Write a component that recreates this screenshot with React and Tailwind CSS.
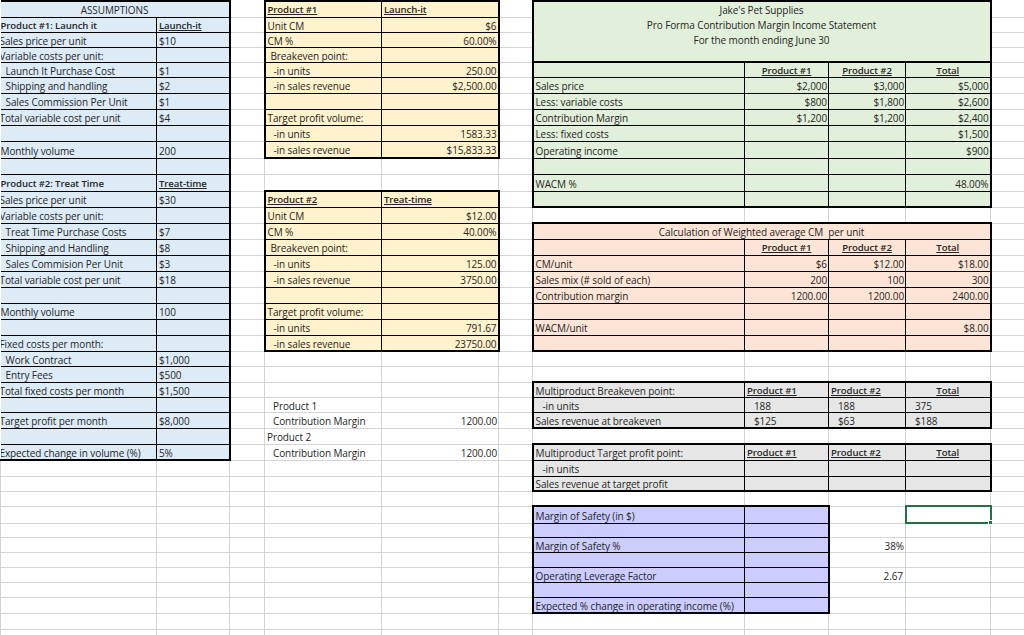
import React from 'react';

const colWidths = ['w-[156px]', 'w-[73px]', 'w-[35px]', 'w-[117px]', 'w-[117px]', 'w-[34px]', 'w-[212px]', 'w-[84px]', 'w-[77px]', 'w-[85px]', 'w-[40px]'];

const rowHeights = [
  'h-[16px]', 'h-[15px]', 'h-[15px]', 'h-[15px]', 'h-[15px]', 'h-[16px]', 'h-[16px]', 'h-[16px]', 'h-[16px]', 'h-[17px]',
  'h-[16px]', 'h-[17px]', 'h-[16px]', 'h-[16px]', 'h-[16px]', 'h-[16px]', 'h-[16px]', 'h-[16px]', 'h-[16px]', 'h-[16px]',
  'h-[16px]', 'h-[16px]', 'h-[15px]', 'h-[16px]', 'h-[15px]', 'h-[15px]', 'h-[16px]', 'h-[16px]', 'h-[16px]', 'h-[16px]',
  'h-[15px]', 'h-[15px]', 'h-[17px]', 'h-[14px]', 'h-[15px]', 'h-[15px]', 'h-[15px]', 'h-[15px]', 'h-[16px]', 'h-[16px]', 'h-[16px]',
];

const blocks = [
  { r0: 0, r1: 28, c0: 0, c1: 1, fill: 'bg-[#ddebf7]' },
  { r0: 0, r1: 9, c0: 3, c1: 4, fill: 'bg-[#fff2cc]' },
  { r0: 12, r1: 21, c0: 3, c1: 4, fill: 'bg-[#fff2cc]' },
  { r0: 0, r1: 12, c0: 6, c1: 9, fill: 'bg-[#e2efda]' },
  { r0: 14, r1: 21, c0: 6, c1: 9, fill: 'bg-[#fce4d6]' },
  { r0: 24, r1: 26, c0: 6, c1: 9, fill: 'bg-[#e6e6e6]' },
  { r0: 28, r1: 30, c0: 6, c1: 9, fill: 'bg-[#e6e6e6]' },
  { r0: 32, r1: 38, c0: 6, c1: 7, fill: 'bg-[#ccccff]' },
];

const right = 'text-right pr-[1px]';
const center = 'text-center';
const ind = 'pl-[5px]';
const ind2 = 'pl-[8px]';
const left = 'pl-[2px]';
const num = 'pl-[9px]';
const bold = 'font-semibold text-[9.6px]';
const head2 = 'font-semibold text-[9.6px] underline pl-[2px]';
const headC = 'font-semibold text-[9.6px] underline text-center';

// row, col, text, extra classes
const cells = [
  [0, 0, 'ASSUMPTIONS', center, 2],
  [1, 0, 'Product #1: Launch it', bold], [1, 1, 'Launch-it', head2],
  [2, 0, 'Sales price per unit', '-indent-[1px]'], [2, 1, '$10', left],
  [3, 0, 'Variable costs per unit:', '-indent-[1px]'],
  [4, 0, 'Launch It Purchase Cost', ind], [4, 1, '$1', left],
  [5, 0, 'Shipping and handling', ind], [5, 1, '$2', left],
  [6, 0, 'Sales Commission Per Unit', ind], [6, 1, '$1', left],
  [7, 0, 'Total variable cost per unit', '-indent-[1px]'], [7, 1, '$4', left],
  [9, 0, 'Monthly volume'], [9, 1, '200', left],
  [11, 0, 'Product #2: Treat Time', bold], [11, 1, 'Treat-time', head2],
  [12, 0, 'Sales price per unit', '-indent-[1px]'], [12, 1, '$30', left],
  [13, 0, 'Variable costs per unit:', '-indent-[1px]'],
  [14, 0, 'Treat Time Purchase Costs', ind], [14, 1, '$7', left],
  [15, 0, 'Shipping and Handling', ind], [15, 1, '$8', left],
  [16, 0, 'Sales Commision Per Unit', ind], [16, 1, '$3', left],
  [17, 0, 'Total variable cost per unit', '-indent-[1px]'], [17, 1, '$18', left],
  [19, 0, 'Monthly volume'], [19, 1, '100', left],
  [21, 0, 'Fixed costs per month:', '-indent-[1px]'],
  [22, 0, 'Work Contract', ind], [22, 1, '$1,000', left],
  [23, 0, 'Entry Fees', ind], [23, 1, '$500', left],
  [24, 0, 'Total fixed costs per month', '-indent-[1px]'], [24, 1, '$1,500', left],
  [26, 0, 'Target profit per month', '-indent-[1px]'], [26, 1, '$8,000', left],
  [28, 0, 'Expected change in volume (%)', '-indent-[1px]'], [28, 1, '5%', left],

  [0, 3, 'Product #1', head2], [0, 4, 'Launch-it', head2],
  [1, 3, 'Unit CM', left], [1, 4, '$6', right],
  [2, 3, 'CM %', left], [2, 4, '60.00%', right],
  [3, 3, 'Breakeven point:', 'pl-[5px]'],
  [4, 3, '-in units', ind2], [4, 4, '250.00', right],
  [5, 3, '-in sales revenue', ind2], [5, 4, '$2,500.00', right],
  [7, 3, 'Target profit volume:', left],
  [8, 3, '-in units', ind2], [8, 4, '1583.33', right],
  [9, 3, '-in sales revenue', ind2], [9, 4, '$15,833.33', right],

  [12, 3, 'Product #2', head2], [12, 4, 'Treat-time', head2],
  [13, 3, 'Unit CM', left], [13, 4, '$12.00', right],
  [14, 3, 'CM %', left], [14, 4, '40.00%', right],
  [15, 3, 'Breakeven point:', 'pl-[5px]'],
  [16, 3, '-in units', ind2], [16, 4, '125.00', right],
  [17, 3, '-in sales revenue', ind2], [17, 4, '3750.00', right],
  [19, 3, 'Target profit volume:', left],
  [20, 3, '-in units', ind2], [20, 4, '791.67', right],
  [21, 3, '-in sales revenue', ind2], [21, 4, '23750.00', right],

  [25, 3, 'Product 1', ind2],
  [26, 3, 'Contribution Margin', ind2], [26, 4, '1200.00', right],
  [27, 3, 'Product 2', left],
  [28, 3, 'Contribution Margin', ind2], [28, 4, '1200.00', right],

  [4, 7, 'Product #1', headC], [4, 8, 'Product #2', headC], [4, 9, 'Total', headC],
  [5, 6, 'Sales price', left], [5, 7, '$2,000', right], [5, 8, '$3,000', right], [5, 9, '$5,000', right],
  [6, 6, 'Less: variable costs', left], [6, 7, '$800', right], [6, 8, '$1,800', right], [6, 9, '$2,600', right],
  [7, 6, 'Contribution Margin', left], [7, 7, '$1,200', right], [7, 8, '$1,200', right], [7, 9, '$2,400', right],
  [8, 6, 'Less: fixed costs', left], [8, 9, '$1,500', right],
  [9, 6, 'Operating income', left], [9, 9, '$900', right],
  [11, 6, 'WACM %', left], [11, 9, '48.00%', right],

  [14, 6, 'Calculation of Weighted average CM  per unit', 'text-center whitespace-pre', 4],
  [15, 7, 'Product #1', headC], [15, 8, 'Product #2', headC], [15, 9, 'Total', headC],
  [16, 6, 'CM/unit', left], [16, 7, '$6', right], [16, 8, '$12.00', right], [16, 9, '$18.00', right],
  [17, 6, 'Sales mix (# sold of each)', left], [17, 7, '200', right], [17, 8, '100', right], [17, 9, '300', right],
  [18, 6, 'Contribution margin', left], [18, 7, '1200.00', right], [18, 8, '1200.00', right], [18, 9, '2400.00', right],
  [20, 6, 'WACM/unit', left], [20, 9, '$8.00', right],

  [24, 6, 'Multiproduct Breakeven point:', left], [24, 7, 'Product #1', head2], [24, 8, 'Product #2', head2], [24, 9, 'Total', headC],
  [25, 6, '-in units', 'pl-[9px]'], [25, 7, '188', num], [25, 8, '188', num], [25, 9, '375', num],
  [26, 6, 'Sales revenue at breakeven', left], [26, 7, '$125', num], [26, 8, '$63', num], [26, 9, '$188', num],

  [28, 6, 'Multiproduct Target profit point:', left], [28, 7, 'Product #1', head2], [28, 8, 'Product #2', head2], [28, 9, 'Total', headC],
  [29, 6, '-in units', 'pl-[9px]'],
  [30, 6, 'Sales revenue at target profit', left],

  [32, 6, 'Margin of Safety (in $)', left],
  [34, 6, 'Margin of Safety %', left], [34, 8, '38%', right],
  [36, 6, 'Operating Leverage Factor', left], [36, 8, '2.67', 'text-right pr-[2px]'],
  [38, 6, 'Expected % change in operating income (%)', left],
];

const lookup = {};
cells.forEach(([r, c, text, cls, colSpan]) => {
  lookup[r + ':' + c] = { text, cls, colSpan };
});

const findBlock = (r, c) => blocks.find(b => r >= b.r0 && r <= b.r1 && c >= b.c0 && c <= b.c1);

const edges = (b, r, c, span) => {
  if (r === 32 && c === 9) return 'border-2 border-[#217346]';
  if (!b) return r === 0 ? 'border border-[#d4d4d4] border-t-0' : 'border border-[#d4d4d4]';
  let out = 'border border-black';
  if (r === b.r0) out += ' border-t-2';
  if (r === b.r1) out += ' border-b-2';
  if (c === b.c0 && c !== 0) out += ' border-l-2';
  if (c === 0) out += ' border-l-0';
  if (c + span - 1 === b.c1) out += ' border-r-2';
  return out;
};

const Row = ({ r }) => {
  const tds = [];
  for (let c = 0; c < colWidths.length; c++) {
    // green title block is one merged cell over four rows
    if (r >= 0 && r <= 3 && c >= 6 && c <= 9) {
      if (r === 0 && c === 6) {
        tds.push(
          <td key={c} colSpan={4} rowSpan={4} className="border-2 border-black bg-[#e2efda] align-top text-center">
            <div className="flex flex-col">
              <div className="h-[16px] leading-[16px]">Jake's Pet Supplies</div>
              <div className="h-[15px] leading-[15px]">Pro Forma Contribution Margin Income Statement</div>
              <div className="h-[15px] leading-[15px]">For the month ending June 30</div>
            </div>
          </td>
        );
      }
      continue;
    }
    const cell = lookup[r + ':' + c];
    const span = cell?.colSpan || 1;
    const b = findBlock(r, c);
    tds.push(
      <td
        key={c}
        colSpan={span}
        className={`p-0 pt-[2px] overflow-hidden whitespace-nowrap ${edges(b, r, c, span)} ${b ? b.fill : ''} ${cell?.cls || ''}`}
      >
        {cell?.text}
      </td>
    );
    c += span - 1;
  }
  return <tr className={rowHeights[r]}>{tds}</tr>;
};

export default function App() {
  return (
    <div className="relative w-[1024px] h-[635px] overflow-hidden bg-white text-[10px] tracking-[-0.1px] leading-none text-[#262626] font-['Open_Sans',sans-serif]">
      <table className="table-fixed border-collapse w-[1030px]">
        <colgroup>
          {colWidths.map((w, i) => <col key={i} className={w} />)}
        </colgroup>
        <tbody>
          {rowHeights.map((h, r) => <Row key={r} r={r} />)}
        </tbody>
      </table>
      {/* fill handle of the selected cell */}
      <div className="absolute left-[988px] top-[520px] w-[5px] h-[5px] bg-[#217346] border border-white" />
    </div>
  );
}
